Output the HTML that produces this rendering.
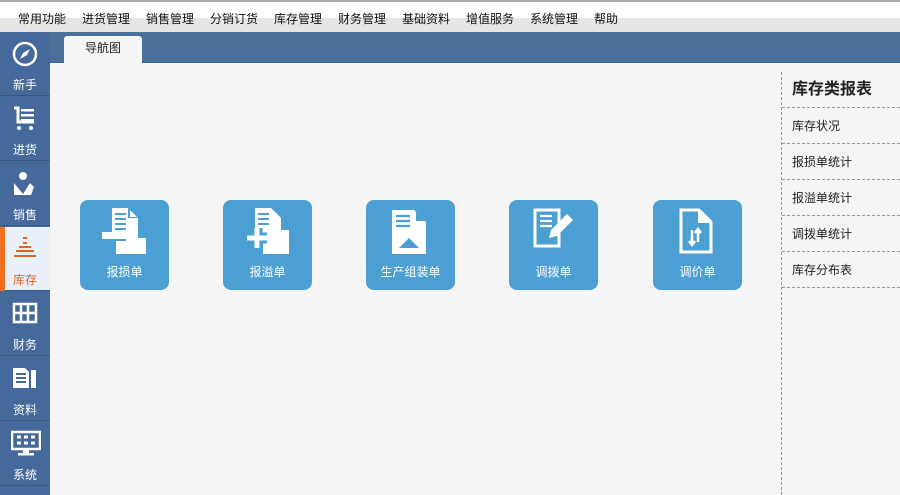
<!DOCTYPE html><html><head><meta charset="utf-8"><style>
*{margin:0;padding:0;box-sizing:border-box}
body{width:900px;height:495px;overflow:hidden;background:#f5f5f5;font-family:"Liberation Sans","Noto Sans CJK SC",sans-serif;position:relative}
#menu{position:absolute;left:0;top:0;width:900px;height:32px;background:linear-gradient(#fff 0,#fff 16px,#e6e6e6 16px);border-top:2px solid #aaa}
#menu span{position:absolute;top:8px;font-size:12px;color:#111}
#band{position:absolute;left:0;top:32px;width:900px;height:31px;background:#4a6f98;border-bottom:1px solid #3d6690}
#tab{position:absolute;left:64px;top:36px;width:78px;height:27px;background:#f5f5f5;border-radius:3px 3px 0 0;font-size:12px;text-align:center;line-height:24px;color:#222}
#side{position:absolute;left:0;top:32px;width:50px;height:463px;background:#44699a}
.it{position:absolute;left:0;width:50px;height:64px;border-bottom:1px solid #36597f;color:#fff;font-size:12px;text-align:center}
.it .l{position:absolute;left:0;right:0;top:44px}
.it svg{position:absolute;left:11px;top:8px}
.act{background:#e9f0fa;color:#e0661a}
.act:before{content:"";position:absolute;left:0;top:0;width:5px;height:64px;background:#f07020}
.tile{position:absolute;top:200px;width:89px;height:90px;background:#4b9fd3;border-radius:8px;color:#fff;font-size:12px;text-align:center}
.tile .l{position:absolute;left:0;right:0;top:63px}
.tile svg{position:absolute;left:22px;top:8px}
#rp{position:absolute;left:781px;top:72px;width:119px;height:423px;border-left:1px dashed #999}
#rp div{height:36px;border-bottom:1px dashed #999;font-size:12px;line-height:36px;padding-left:10px;color:#222}
#rp .t{font-size:16px;font-weight:bold;height:36px;line-height:36px;color:#222}
</style></head><body>
<div id="menu"><span style="left:18px">常用功能</span><span style="left:82px">进货管理</span><span style="left:146px">销售管理</span><span style="left:210px">分销订货</span><span style="left:274px">库存管理</span><span style="left:338px">财务管理</span><span style="left:402px">基础资料</span><span style="left:466px">增值服务</span><span style="left:530px">系统管理</span><span style="left:594px">帮助</span></div>
<div id="band"></div>
<div id="tab">导航图</div>
<div id="side">
<div class="it" style="top:0"><svg width="28" height="28" viewBox="0 0 28 28"><circle cx="14" cy="14" r="11" fill="none" stroke="#fff" stroke-width="2.5"/><path d="M19 9 L12 13 L9 19 L16 15Z" fill="#fff"/></svg><div class="l">新手</div></div>
<div class="it" style="top:65px"><svg width="28" height="28" viewBox="0 0 28 28"><path d="M3 3h4v14h16" fill="none" stroke="#fff" stroke-width="3"/><rect x="10" y="4" width="13" height="2.5" fill="#fff"/><rect x="10" y="9" width="13" height="2.5" fill="#fff"/><rect x="10" y="14" width="13" height="2.5" fill="#fff"/><circle cx="8" cy="23" r="2" fill="#fff"/><circle cx="20" cy="23" r="2" fill="#fff"/></svg><div class="l">进货</div></div>
<div class="it" style="top:130px"><svg width="28" height="28" viewBox="0 0 28 28"><circle cx="12" cy="6" r="4" fill="#fff"/><path d="M3 13 L12 24 L19 13 L23 17 L20 25 L3 25Z" fill="#fff"/></svg><div class="l">销售</div></div>
<div class="it act" style="top:195px"><svg width="28" height="28" viewBox="0 0 28 28" fill="#e0661a"><rect x="12" y="2" width="4" height="2"/><rect x="12" y="7" width="4" height="2"/><rect x="8" y="11" width="12" height="2"/><rect x="5" y="15" width="18" height="2"/><rect x="3" y="20" width="22" height="2"/></svg><div class="l">库存</div></div>
<div class="it" style="top:260px"><svg width="28" height="28" viewBox="0 0 28 28"><rect x="3" y="4" width="22" height="18" fill="none" stroke="#fff" stroke-width="2.5"/><path d="M3 13h22M10 4v18M17 4v18" stroke="#fff" stroke-width="2.5"/></svg><div class="l">财务</div></div>
<div class="it" style="top:325px"><svg width="28" height="28" viewBox="0 0 28 28"><path d="M2 3h12l4 4v16H2Z" fill="#fff"/><path d="M5 9h10M5 13h10M5 17h10" stroke="#44699a" stroke-width="2"/><path d="M20 5h5v18h-5Z" fill="#fff"/></svg><div class="l">资料</div></div>
<div class="it" style="top:390px"><svg width="30" height="28" viewBox="0 0 30 28"><rect x="1" y="2" width="28" height="17" fill="none" stroke="#fff" stroke-width="2.5"/><path d="M6 7h4M13 7h4M20 7h4M6 13h4M13 13h4M20 13h4" stroke="#fff" stroke-width="3"/><rect x="12" y="19" width="6" height="4" fill="#fff"/><rect x="7" y="23" width="16" height="2.5" fill="#fff"/></svg><div class="l">系统</div></div>
</div>
<div class="tile" style="left:80px"><svg width="46" height="48" viewBox="0 0 46 48"><path d="M10 0h16l10 10v20H10Z" fill="#fff"/><path d="M26 0v10h10" fill="#4b9fd3"/><path d="M28 2l7 7h-7Z" fill="#fff"/><path d="M13 6h11M13 11h11M13 16h11M13 21h11" stroke="#4b9fd3" stroke-width="2"/><rect x="14" y="30" width="30" height="16" fill="#fff"/><rect x="0" y="24" width="24" height="8" fill="#fff"/><path d="M0 32h24" stroke="#4b9fd3" stroke-width="2"/></svg><div class="l">报损单</div></div>
<div class="tile" style="left:223px"><svg width="46" height="48" viewBox="0 0 46 48"><path d="M10 0h16l10 10v20H10Z" fill="#fff"/><path d="M28 2l7 7h-7Z" fill="#fff"/><path d="M13 6h11M13 11h11M13 16h11" stroke="#4b9fd3" stroke-width="2"/><rect x="18" y="22" width="26" height="24" fill="#fff"/><path d="M2 30h20M12 20v20" stroke="#4b9fd3" stroke-width="11"/><path d="M2 30h20M12 20v20" stroke="#fff" stroke-width="5"/></svg><div class="l">报溢单</div></div>
<div class="tile" style="left:366px"><svg width="46" height="48" viewBox="0 0 46 48"><path d="M4 2h22l12 12v32H4Z" fill="#fff"/><path d="M28 4l9 9h-9Z" fill="#4b9fd3"/><path d="M8 8h14M8 13h14M8 18h14" stroke="#4b9fd3" stroke-width="2.2"/><path d="M11 40l10-10 10 10Z" fill="#4b9fd3"/></svg><div class="l">生产组装单</div></div>
<div class="tile" style="left:509px"><svg width="48" height="48" viewBox="0 0 48 48"><path d="M4 2h24v36H4Z" fill="none" stroke="#fff" stroke-width="3"/><path d="M9 8h12M9 13h12M9 18h12" stroke="#fff" stroke-width="2.2"/><path d="M36 6l6 6-16 16-8 2 2-8Z" fill="#fff"/></svg><div class="l">调拨单</div></div>
<div class="tile" style="left:653px"><svg width="46" height="48" viewBox="0 0 46 48"><path d="M6 2h18l12 12v30H6Z" fill="none" stroke="#fff" stroke-width="3"/><path d="M23 3v12h12" fill="#fff"/><path d="M17 22v14M14 33l3 4 3-4M23 22v12M20 25l3-4 3 4" stroke="#fff" stroke-width="2.5" fill="none"/></svg><div class="l">调价单</div></div>
<div id="rp"><div class="t">库存类报表</div><div>库存状况</div><div>报损单统计</div><div>报溢单统计</div><div>调拨单统计</div><div>库存分布表</div></div>
</body></html>
